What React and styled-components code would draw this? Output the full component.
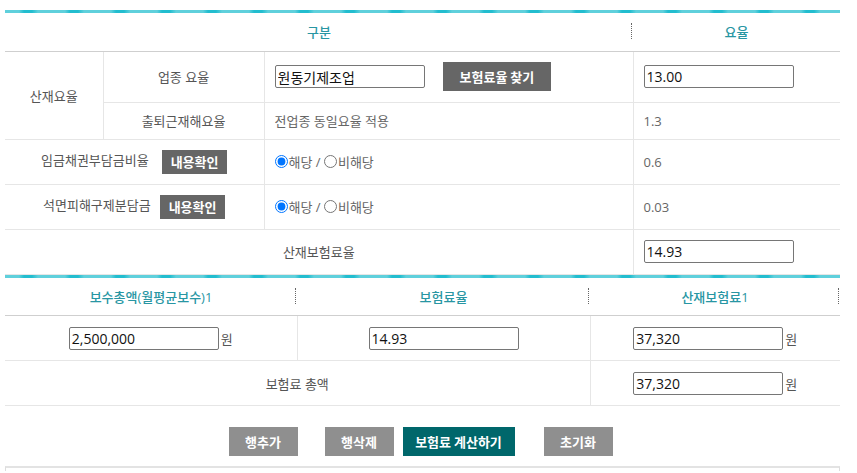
import React from "react";
import styled, { createGlobalStyle } from "styled-components";

const GlobalStyle = createGlobalStyle`
  body {
    margin: 0;
    background: #fff;
    font-family: "Open Sans", "Noto Sans CJK KR", sans-serif;
    font-size: 13px;
    color: #555;
  }
`;

const Wrap = styled.div`
  width: 835px;
  padding: 10px 0 0 5px;
`;

const TopLine = styled.div`
  height: 3px;
  background: repeating-linear-gradient(
    90deg,
    #5fd0dc 0px,
    #5fd0dc 14px,
    #22bdcf 19px,
    #22bdcf 27px,
    #5fd0dc 33px,
    #5fd0dc 46px
  );
`;

const Table = styled.table`
  width: 835px;
  table-layout: fixed;
  border-collapse: collapse;
  border-left: hidden;
  border-right: hidden;
`;

const HeadRow = styled.tr`
  height: 38px;
`;

const Th = styled.th`
  position: relative;
  font-weight: 500;
  color: #2896a3;
  font-size: 13px;
  text-align: center;
  border-bottom: 1px solid #cfcfcf;
  padding: 0;

  &::after {
    content: "";
    display: ${(p) => (p.$sep ? "block" : "none")};
    position: absolute;
    right: 1px;
    top: 10px;
    height: 16px;
    border-right: 1px dotted #666;
  }
`;

const Tr = styled.tr`
  height: ${(p) => p.$h}px;
`;

const Td = styled.td`
  border: 1px solid #e6e6e6;
  padding: 0 10px;
  vertical-align: middle;
  text-align: ${(p) => (p.$left ? "left" : "center")};
  color: ${(p) => (p.$value ? "#666" : "#555")};
  white-space: nowrap;
`;

const Input = styled.input`
  width: 150px;
  height: 23px;
  box-sizing: border-box;
  border: 1px solid #767676;
  border-radius: 2px;
  padding: 1px 2px;
  font-family: "Open Sans", "Noto Sans CJK KR", sans-serif;
  font-size: 14px;
  color: #111;
  vertical-align: middle;
`;

const Unit = styled.span`
  margin-left: 2px;
  vertical-align: middle;
`;

const DarkButton = styled.button`
  display: inline-block;
  height: ${(p) => (p.$small ? 24 : 29)}px;
  padding: 0 ${(p) => (p.$small ? 9 : 17)}px;
  margin-left: ${(p) => p.$ml || 0}px;
  border: 0;
  background: #666;
  color: #fff;
  font-family: "Noto Sans CJK KR", sans-serif;
  font-size: 13px;
  font-weight: 700;
  vertical-align: middle;
`;

const Radios = styled.label`
  display: inline-flex;
  align-items: center;
  color: #666;

  input {
    margin: 0 1px 0 0;
    width: 13px;
    height: 13px;
  }
`;

const ButtonBar = styled.div`
  display: flex;
  justify-content: center;
  padding: 21px 4px 10px 0;
`;

const ActionButton = styled.button`
  height: 29px;
  width: ${(p) => p.$w}px;
  margin-left: ${(p) => p.$ml || 0}px;
  border: 0;
  background: ${(p) => (p.$primary ? "#00676b" : "#8f8f8f")};
  color: #fff;
  font-family: "Noto Sans CJK KR", sans-serif;
  font-size: 13px;
  font-weight: 700;
`;

const BottomBox = styled.div`
  height: 3px;
  border: 1px solid #ddd;
  border-top: 2px solid #e3e3e3;
  border-bottom: 0;
`;

const Choice = ({ name }) => (
  <Radios>
    <input type="radio" defaultChecked name={name} />
    해당 /&nbsp;
    <input type="radio" name={name} />
    비해당
  </Radios>
);

export default function App() {
  return (
    <Wrap>
      <GlobalStyle />
      <TopLine />
      <Table>
        <colgroup>
          <col style={{ width: 98 }} />
          <col style={{ width: 161 }} />
          <col style={{ width: 369 }} />
          <col style={{ width: 207 }} />
        </colgroup>
        <thead>
          <HeadRow>
            <Th colSpan={3} $sep>
              구분
            </Th>
            <Th>요율</Th>
          </HeadRow>
        </thead>
        <tbody>
          <Tr $h={51}>
            <Td rowSpan={2}>산재요율</Td>
            <Td>업종 요율</Td>
            <Td $left>
              <Input defaultValue="원동기제조업" />
              <DarkButton $ml={18}>보험료율 찾기</DarkButton>
            </Td>
            <Td $left>
              <Input defaultValue="13.00" />
            </Td>
          </Tr>
          <Tr $h={37}>
            <Td>출퇴근재해요율</Td>
            <Td $left $value>
              전업종 동일요율 적용
            </Td>
            <Td $left $value>
              1.3
            </Td>
          </Tr>
          <Tr $h={45}>
            <Td colSpan={2}>
              임금채권부담금비율
              <DarkButton $small $ml={13}>
                내용확인
              </DarkButton>
            </Td>
            <Td $left>
              <Choice name="wage" />
            </Td>
            <Td $left $value>
              0.6
            </Td>
          </Tr>
          <Tr $h={45}>
            <Td colSpan={2}>
              석면피해구제분담금
              <DarkButton $small $ml={9}>
                내용확인
              </DarkButton>
            </Td>
            <Td $left>
              <Choice name="asbestos" />
            </Td>
            <Td $left $value>
              0.03
            </Td>
          </Tr>
          <Tr $h={45}>
            <Td colSpan={3}>산재보험료율</Td>
            <Td $left>
              <Input defaultValue="14.93" />
            </Td>
          </Tr>
        </tbody>
      </Table>

      <TopLine />
      <Table>
        <colgroup>
          <col style={{ width: 292 }} />
          <col style={{ width: 293 }} />
          <col style={{ width: 250 }} />
        </colgroup>
        <thead>
          <HeadRow>
            <Th $sep>보수총액(월평균보수)1</Th>
            <Th $sep>보험료율</Th>
            <Th $sep>산재보험료1</Th>
          </HeadRow>
        </thead>
        <tbody>
          <Tr $h={45}>
            <Td>
              <Input defaultValue="2,500,000" />
              <Unit>원</Unit>
            </Td>
            <Td>
              <Input defaultValue="14.93" />
            </Td>
            <Td>
              <Input defaultValue="37,320" />
              <Unit>원</Unit>
            </Td>
          </Tr>
          <Tr $h={45}>
            <Td colSpan={2}>보험료 총액</Td>
            <Td>
              <Input defaultValue="37,320" />
              <Unit>원</Unit>
            </Td>
          </Tr>
        </tbody>
      </Table>

      <ButtonBar>
        <ActionButton $w={69}>행추가</ActionButton>
        <ActionButton $w={69} $ml={27}>
          행삭제
        </ActionButton>
        <ActionButton $w={112} $ml={9} $primary>
          보험료 계산하기
        </ActionButton>
        <ActionButton $w={69} $ml={29}>
          초기화
        </ActionButton>
      </ButtonBar>
      <BottomBox />
    </Wrap>
  );
}
